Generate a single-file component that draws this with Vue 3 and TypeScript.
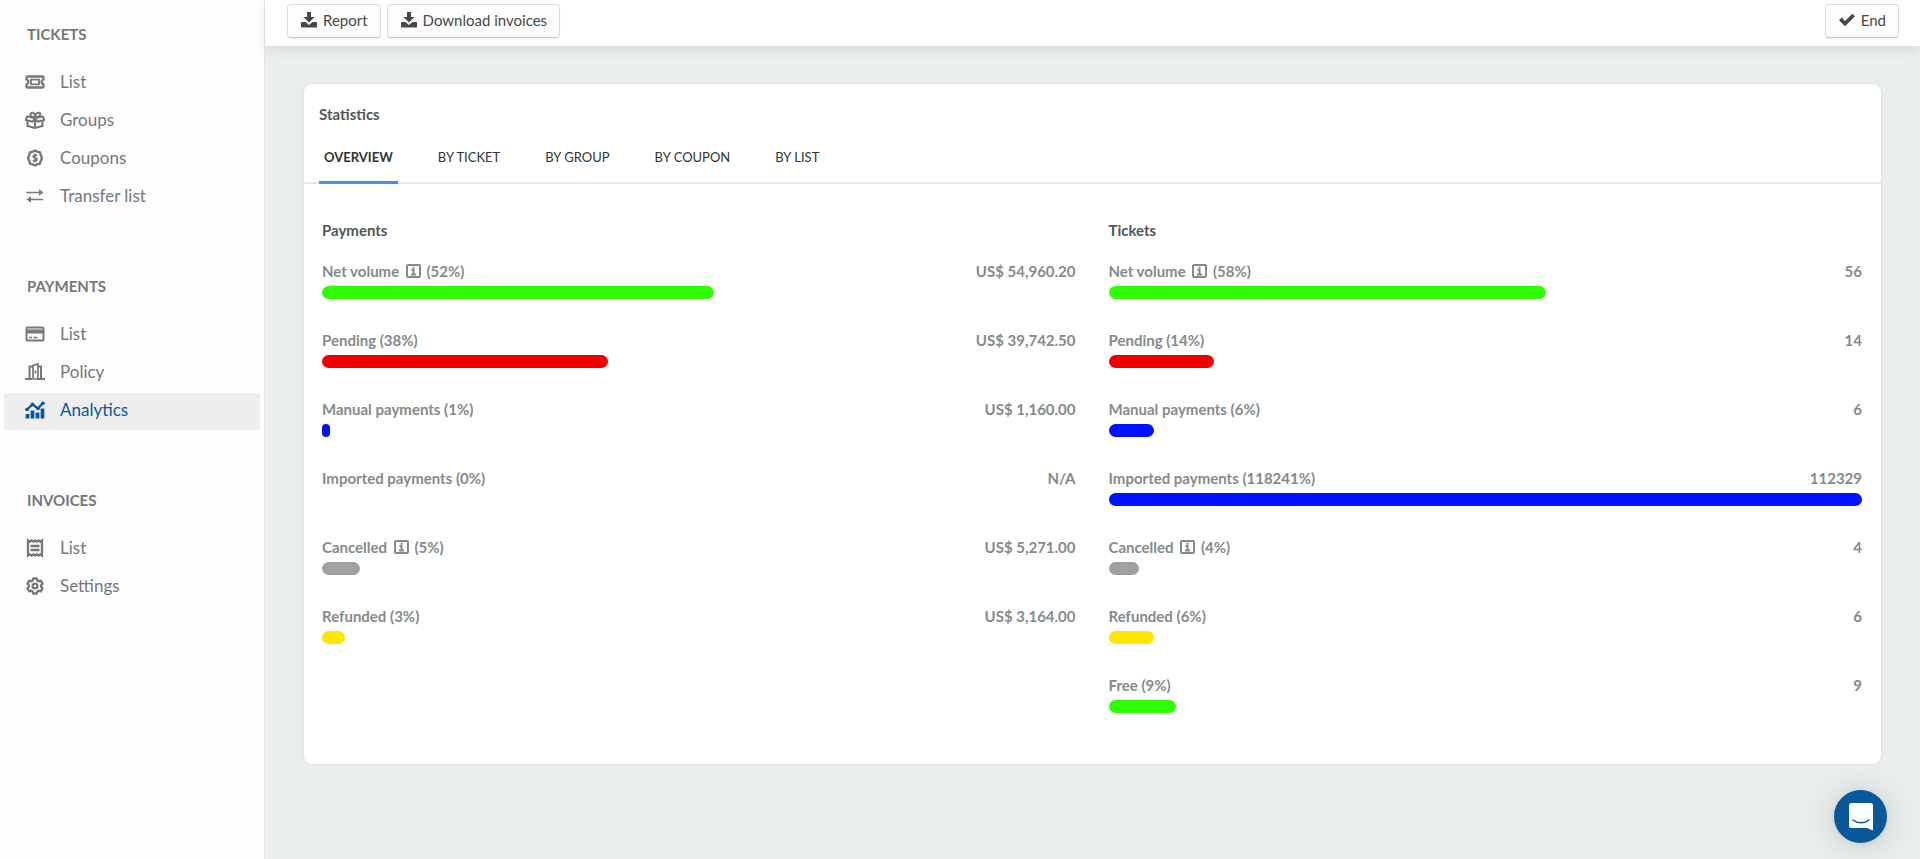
<script setup lang="ts">
interface NavItem {
  label: string
  icon: string
  active?: boolean
}
interface NavSection {
  title: string
  items: NavItem[]
}
interface Stat {
  label: string
  percent: number
  value: string
  color: string
  info?: boolean
}
interface StatColumn {
  title: string
  stats: Stat[]
}

const sections: NavSection[] = [
  {
    title: 'TICKETS',
    items: [
      { label: 'List', icon: 'ticket' },
      { label: 'Groups', icon: 'gift' },
      { label: 'Coupons', icon: 'coupon' },
      { label: 'Transfer list', icon: 'transfer' },
    ],
  },
  {
    title: 'PAYMENTS',
    items: [
      { label: 'List', icon: 'card' },
      { label: 'Policy', icon: 'door' },
      { label: 'Analytics', icon: 'chart', active: true },
    ],
  },
  {
    title: 'INVOICES',
    items: [
      { label: 'List', icon: 'receipt' },
      { label: 'Settings', icon: 'gear' },
    ],
  },
]

const tabs: string[] = ['OVERVIEW', 'BY TICKET', 'BY GROUP', 'BY COUPON', 'BY LIST']

const columns: StatColumn[] = [
  {
    title: 'Payments',
    stats: [
      { label: 'Net volume', percent: 52, value: 'US$ 54,960.20', color: '#2eff00', info: true },
      { label: 'Pending', percent: 38, value: 'US$ 39,742.50', color: '#f20000' },
      { label: 'Manual payments', percent: 1, value: 'US$ 1,160.00', color: '#0012ff' },
      { label: 'Imported payments', percent: 0, value: 'N/A', color: '#0012ff' },
      { label: 'Cancelled', percent: 5, value: 'US$ 5,271.00', color: '#a0a0a0', info: true },
      { label: 'Refunded', percent: 3, value: 'US$ 3,164.00', color: '#ffe600' },
    ],
  },
  {
    title: 'Tickets',
    stats: [
      { label: 'Net volume', percent: 58, value: '56', color: '#2eff00', info: true },
      { label: 'Pending', percent: 14, value: '14', color: '#f20000' },
      { label: 'Manual payments', percent: 6, value: '6', color: '#0012ff' },
      { label: 'Imported payments', percent: 118241, value: '112329', color: '#0012ff' },
      { label: 'Cancelled', percent: 4, value: '4', color: '#a0a0a0', info: true },
      { label: 'Refunded', percent: 6, value: '6', color: '#ffe600' },
      { label: 'Free', percent: 9, value: '9', color: '#2eff00' },
    ],
  },
]

const barWidth = (percent: number): string => `${Math.min(percent, 100)}%`
</script>

<template>
  <div class="layout">
    <nav class="sidebar">
      <section v-for="section in sections" :key="section.title" class="nav-section">
        <h2 class="nav-title">{{ section.title }}</h2>
        <ul class="nav-list">
          <li v-for="item in section.items" :key="item.label">
            <a href="#" class="nav-link" :class="{ active: item.active }">
              <svg class="nav-icon" viewBox="0 0 20 20" fill="none" stroke="currentColor" stroke-width="2.300" aria-hidden="true">
                <template v-if="item.icon === 'ticket'">
                  <path d="M2.500 4.500h15a1 1 0 0 1 1 1v2a2.600 2.600 0 0 0 0 5v2a1 1 0 0 1-1 1h-15a1 1 0 0 1-1-1v-2a2.600 2.600 0 0 0 0-5v-2a1 1 0 0 1 1-1z" />
                  <path d="M6 7.700h8v4.600H6z" stroke-width="1.800" />
                </template>
                <template v-else-if="item.icon === 'gift'">
                  <path d="M2.500 11v5l7.500 2 7.500-2v-5M10 8v10" stroke-width="2" />
                  <path d="M2 6.500l8 1.500 8-1.500 1.200 3.500-6.700 1.700-2.500-3.200-2.500 3.200L.8 10z" stroke-width="2" stroke-linejoin="round" />
                  <path d="M10 7.500C4 7 5 3 7 2.700S10.500 5 10 7.500c0-3.500 2.500-5.500 4.500-4.500S15.500 6.500 10 7.500" stroke-width="2" />
                </template>
                <template v-else-if="item.icon === 'coupon'">
                  <path d="M10 2.500l2.300 1.100 2.700.7.700 2.700 1.300 3-1.300 3-.7 2.700-2.700.7-2.300 1.100-2.300-1.100-2.700-.7-.7-2.700-1.300-3 1.300-3 .7-2.700 2.700-.7z" stroke-linejoin="round" />
                  <path d="M12.200 7.700C11 6.700 8.200 6.700 8.200 8.400s3.800 1.300 3.800 3.100-2.900 1.800-4.200.8M10 5.500v9" stroke-width="1.700" />
                </template>
                <template v-else-if="item.icon === 'transfer'">
                  <path d="M1.500 6.500h14M18 13.500H4.500" stroke-width="1.700" />
                  <path d="M14 3.300l4.500 3.200L14 9.700zM6 10.300l-4.500 3.200L6 16.700z" fill="currentColor" stroke="none" />
                </template>
                <template v-else-if="item.icon === 'card'">
                  <rect x="1.500" y="3.500" width="17" height="13" rx="1" stroke-width="2" />
                  <path d="M2 7.500h16" stroke-width="4" />
                  <path d="M2.500 5.700h15" stroke="#a4a9a9" stroke-width="1" />
                  <path d="M4 13.500h3M8.500 13.500h4" stroke-width="1.500" />
                </template>
                <template v-else-if="item.icon === 'door'">
                  <path d="M0 17h7M12 17h8M4.500 17V4.500H8M13.500 4.500H16V17" stroke-width="2" />
                  <path d="M8 17V3.500l5-1.500v15zM10.500 8.500v3" stroke-width="1.700" />
                </template>
                <template v-else-if="item.icon === 'chart'">
                  <path d="M2.500 14v4.500M7.500 10.500v8M12.500 12.500v6M17.500 8.500v10" stroke-width="3.700" />
                  <path d="M2 9.500l5.500-5 5.500 4L18 3" />
                  <g fill="currentColor" stroke="none">
                    <circle cx="2" cy="9.500" r="1.800" /><circle cx="7.500" cy="4.200" r="1.800" />
                    <circle cx="13" cy="8.500" r="1.800" /><circle cx="18" cy="3.200" r="1.800" />
                  </g>
                </template>
                <template v-else-if="item.icon === 'receipt'">
                  <path d="M3 2.500l1.700 1.200L6.500 2.500l1.700 1.200L10 2.500l1.800 1.200 1.700-1.200 1.800 1.200L17 2.500v15l-1.700-1.200-1.800 1.200-1.700-1.200-1.800 1.200-1.800-1.200-1.700 1.200-1.800-1.200L3 17.500z" />
                  <path d="M5.500 8h9M5.500 12h9" />
                </template>
                <template v-else>
                  <path d="M8.200 2.500h3.600l.6 2.100 1.300.7 2.100-.6 1.800 3.100-1.500 1.500v1.400l1.500 1.500-1.800 3.100-2.100-.6-1.300.7-.6 2.100H8.200l-.6-2.100-1.300-.7-2.100.6-1.800-3.100 1.500-1.500V9.300L2.400 7.800l1.800-3.100 2.100.6 1.300-.7z" stroke-linejoin="round" />
                  <circle cx="10" cy="10" r="2.400" />
                </template>
              </svg>
              <span>{{ item.label }}</span>
            </a>
          </li>
        </ul>
      </section>
    </nav>

    <div class="content">
      <header class="toolbar">
        <button type="button" class="btn">
          <svg class="btn-icon" viewBox="0 0 16 16" fill="currentColor" aria-hidden="true">
            <path d="M6 0h4v5h3.500L8 10.500 2.500 5H6zM1 10h3.500L8 13l3.500-3H15a1 1 0 0 1 1 1v3.500a1 1 0 0 1-1 1H1a1 1 0 0 1-1-1V11a1 1 0 0 1 1-1z" />
          </svg>
          Report
        </button>
        <button type="button" class="btn">
          <svg class="btn-icon" viewBox="0 0 16 16" fill="currentColor" aria-hidden="true">
            <path d="M6 0h4v5h3.500L8 10.500 2.500 5H6zM1 10h3.500L8 13l3.500-3H15a1 1 0 0 1 1 1v3.500a1 1 0 0 1-1 1H1a1 1 0 0 1-1-1V11a1 1 0 0 1 1-1z" />
          </svg>
          Download invoices
        </button>
        <button type="button" class="btn end">
          <svg class="btn-icon" viewBox="0 0 16 16" fill="currentColor" aria-hidden="true">
            <path d="M0 8.300l2.700-2.700L6 9l7.300-7.300L16 4.300 6 14.300z" />
          </svg>
          End
        </button>
      </header>

      <main class="card">
        <h1 class="card-title">Statistics</h1>
        <div class="tabs" role="tablist">
          <button
            v-for="(tab, index) in tabs"
            :key="tab"
            type="button"
            role="tab"
            class="tab"
            :class="{ selected: index === 0 }"
            :aria-selected="index === 0"
          >
            {{ tab }}
          </button>
        </div>
        <div class="columns">
          <section v-for="column in columns" :key="column.title">
            <h2 class="column-title">{{ column.title }}</h2>
            <div v-for="stat in column.stats" :key="stat.label" class="stat">
              <div class="stat-head">
                <span>
                  {{ stat.label }}
                  <svg v-if="stat.info" class="info" viewBox="0 0 15 14" fill="none" stroke="currentColor" aria-hidden="true">
                    <rect x="1" y="1" width="13" height="12" rx="1" stroke-width="2" />
                    <path d="M5.500 6h2v4.500M5 10.500h5M7.500 2.800v2" stroke-width="2" />
                  </svg>
                  ({{ stat.percent }}%)
                </span>
                <span>{{ stat.value }}</span>
              </div>
              <div class="bar" :style="{ width: barWidth(stat.percent), background: stat.color }"></div>
            </div>
          </section>
        </div>
      </main>
    </div>

    <button type="button" class="chat" aria-label="Open chat">
      <svg viewBox="0 0 24 28" fill="#fff" aria-hidden="true">
        <path d="M2.500 0h19A2.500 2.500 0 0 1 24 2.500v25L18 25H2.500A2.500 2.500 0 0 1 0 22.500v-20A2.500 2.500 0 0 1 2.500 0z" />
        <path d="M4 17c4.500 3.700 11.500 3.700 16 0" fill="none" stroke="#08589a" stroke-width="1.500" stroke-linecap="round" />
      </svg>
    </button>
  </div>
</template>

<style>
body {
  margin: 0;
  background: #eaeeef;
}
</style>

<style scoped>
.layout {
  display: flex;
  min-height: 100vh;
  font-family: Lato, "Open Sans", sans-serif;
  font-size: 15px;
  line-height: 20px;
  color: #484848;
}
h1,
h2,
ul {
  margin: 0;
  padding: 0;
  list-style: none;
}
button {
  font: inherit;
  color: inherit;
  cursor: pointer;
}
.sidebar {
  box-sizing: border-box;
  flex: 0 0 265px;
  padding: 24px 4px 0;
  background: #fdfdfd;
  border-right: 1px solid #e2e5e5;
}
.nav-section {
  margin-bottom: 60px;
}
.nav-title {
  margin: 0 0 21px;
  padding-left: 23px;
  font-size: 15px;
  line-height: 20px;
  font-weight: 700;
  color: #747878;
}
.nav-list {
  display: grid;
  gap: 1px;
}
.nav-link {
  box-sizing: border-box;
  display: flex;
  align-items: center;
  gap: 15px;
  height: 37px;
  padding: 0 0 3px 21px;
  border-radius: 4px;
  font-size: 17px;
  color: #747878;
  text-decoration: none;
}
.nav-link.active {
  background: #eee;
  color: #08589a;
}
.nav-icon {
  width: 20px;
  height: 20px;
}
.content {
  flex: 1;
  min-width: 0;
}
.toolbar {
  display: flex;
  gap: 6px;
  padding: 4px 21px 8px 22px;
  background: #fff;
  box-shadow: 0 4px 12px rgba(0, 0, 0, 0.08);
}
.btn {
  box-sizing: border-box;
  display: flex;
  align-items: center;
  gap: 6px;
  height: 34px;
  padding: 0 12px 2px 13px;
  border: 1px solid #dcdcdc;
  border-bottom-color: #ccc;
  border-radius: 4px;
  background: #fdfdfd;
  box-shadow: 0 1px 1px rgba(0, 0, 0, 0.08);
}
.btn.end {
  margin-left: auto;
}
.btn-icon {
  width: 16px;
  height: 16px;
}
.card {
  margin: 38px 39px 0;
  padding-top: 20px;
  padding-bottom: 20px;
  border-radius: 8px;
  background: #fff;
  box-shadow: 0 0 3px rgba(0, 0, 0, 0.1);
}
.card-title {
  padding-left: 15px;
  font-size: 15px;
  line-height: 20px;
  font-weight: 700;
  color: #51565a;
}
.tabs {
  display: flex;
  gap: 35px;
  margin-top: 8px;
  padding-left: 15px;
  box-shadow: inset 0 -2px #e8e8ea;
}
.tab {
  height: 52px;
  padding: 0 5px;
  border: 0;
  border-bottom: 3px solid transparent;
  background: none;
  font-size: 13px;
  color: #333;
}
.tab.selected {
  border-bottom-color: #4f8edb;
  font-weight: 700;
}
.columns {
  display: grid;
  grid-template-columns: 1fr 1fr;
  gap: 33px;
  padding: 36px 19px 0 18px;
}
.column-title {
  margin-bottom: 21px;
  font-size: 15px;
  line-height: 20px;
  font-weight: 700;
  color: #51565a;
}
.stat {
  height: 69px;
  font-weight: 700;
  color: #858a8a;
}
.stat-head {
  display: flex;
  justify-content: space-between;
  margin-bottom: 5px;
}
.info {
  width: 15px;
  height: 14px;
  margin: 0 2px 0 3px;
  vertical-align: -1px;
}
.bar {
  height: 13px;
  border-radius: 7px;
}
.chat {
  position: fixed;
  right: 33px;
  bottom: 16px;
  display: flex;
  align-items: center;
  justify-content: center;
  width: 53px;
  height: 53px;
  padding: 0;
  border: 0;
  border-radius: 50%;
  background: #08589a;
  box-shadow: 0 1px 6px rgba(0, 0, 0, 0.08), 0 2px 32px rgba(0, 0, 0, 0.16);
}
.chat svg {
  width: 24px;
  height: 28px;
}
</style>
